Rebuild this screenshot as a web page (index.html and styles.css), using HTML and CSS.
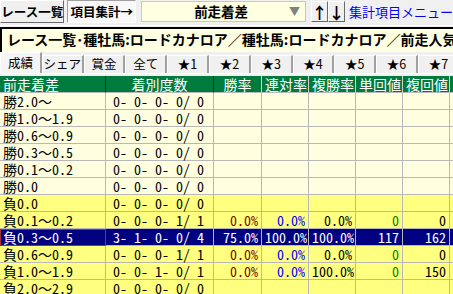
FILE: index.html
```html
<!DOCTYPE html>
<html lang="ja">
<head>
<meta charset="UTF-8">
<title>前走着差</title>
<link rel="stylesheet" href="styles.css">
</head>
<body>
<div class="toolbar">
    <div class="btn race">レース一覧</div>
    <div class="btn sum">項目集計→</div>
    <div class="combo">
        <span class="combo-text">前走着差</span>
        <span class="combo-arrow">▼</span>
    </div>
    <div class="updown">
        <div class="btn arrow">↑</div>
        <div class="btn arrow">↓</div>
    </div>
    <span class="menu">集計項目メニュー</span>
</div>

<div class="condition">レース一覧･種牡馬:ロードカナロア／種牡馬:ロードカナロア／前走人気</div>

<div class="tabs">
    <div class="tab active">成績</div>
    <div class="tab">シェア</div>
    <div class="tab">賞金</div>
    <div class="tab">全て</div>
    <div class="tab">★1</div>
    <div class="tab">★2</div>
    <div class="tab">★3</div>
    <div class="tab">★4</div>
    <div class="tab">★5</div>
    <div class="tab">★6</div>
    <div class="tab">★7</div>
</div>

<div class="grid">
    <div class="row head">
        <div class="cell fix left">前走着差</div>
        <div class="cell fix">着別度数</div>
        <div class="cell">勝率</div>
        <div class="cell">連対率</div>
        <div class="cell">複勝率</div>
        <div class="cell">単回値</div>
        <div class="cell">複回値</div>
        <div class="cell"></div>
    </div>
    <!-- win margin rows -->
    <div class="row">
        <div class="cell name">勝2.0～</div><div class="cell count">0- 0- 0- 0/ 0</div>
        <div class="cell"></div><div class="cell"></div><div class="cell"></div><div class="cell"></div><div class="cell"></div><div class="cell"></div>
    </div>
    <div class="row">
        <div class="cell name">勝1.0～1.9</div><div class="cell count">0- 0- 0- 0/ 0</div>
        <div class="cell"></div><div class="cell"></div><div class="cell"></div><div class="cell"></div><div class="cell"></div><div class="cell"></div>
    </div>
    <div class="row">
        <div class="cell name">勝0.6～0.9</div><div class="cell count">0- 0- 0- 0/ 0</div>
        <div class="cell"></div><div class="cell"></div><div class="cell"></div><div class="cell"></div><div class="cell"></div><div class="cell"></div>
    </div>
    <div class="row">
        <div class="cell name">勝0.3～0.5</div><div class="cell count">0- 0- 0- 0/ 0</div>
        <div class="cell"></div><div class="cell"></div><div class="cell"></div><div class="cell"></div><div class="cell"></div><div class="cell"></div>
    </div>
    <div class="row">
        <div class="cell name">勝0.1～0.2</div><div class="cell count">0- 0- 0- 0/ 0</div>
        <div class="cell"></div><div class="cell"></div><div class="cell"></div><div class="cell"></div><div class="cell"></div><div class="cell"></div>
    </div>
    <div class="row">
        <div class="cell name">勝0.0</div><div class="cell count">0- 0- 0- 0/ 0</div>
        <div class="cell"></div><div class="cell"></div><div class="cell"></div><div class="cell"></div><div class="cell"></div><div class="cell"></div>
    </div>
    <!-- lose margin rows -->
    <div class="row lose">
        <div class="cell name">負0.0</div><div class="cell count">0- 0- 0- 0/ 0</div>
        <div class="cell"></div><div class="cell"></div><div class="cell"></div><div class="cell"></div><div class="cell"></div><div class="cell"></div>
    </div>
    <div class="row lose">
        <div class="cell name">負0.1～0.2</div><div class="cell count">0- 0- 0- 1/ 1</div>
        <div class="cell num win">0.0%</div><div class="cell num ren">0.0%</div><div class="cell num">0.0%</div><div class="cell num tan">0</div><div class="cell num">0</div><div class="cell"></div>
    </div>
    <div class="row selected">
        <div class="cell name">負0.3～0.5</div><div class="cell count">3- 1- 0- 0/ 4</div>
        <div class="cell num">75.0%</div><div class="cell num">100.0%</div><div class="cell num">100.0%</div><div class="cell num">117</div><div class="cell num">162</div><div class="cell"></div>
    </div>
    <div class="row lose">
        <div class="cell name">負0.6～0.9</div><div class="cell count">0- 0- 0- 1/ 1</div>
        <div class="cell num win">0.0%</div><div class="cell num ren">0.0%</div><div class="cell num">0.0%</div><div class="cell num tan">0</div><div class="cell num">0</div><div class="cell"></div>
    </div>
    <div class="row lose">
        <div class="cell name">負1.0～1.9</div><div class="cell count">0- 0- 1- 0/ 1</div>
        <div class="cell num win">0.0%</div><div class="cell num ren">0.0%</div><div class="cell num">100.0%</div><div class="cell num tan">0</div><div class="cell num">150</div><div class="cell"></div>
    </div>
    <div class="row lose">
        <div class="cell name">負2.0～2.9</div><div class="cell count">0- 0- 0- 0/ 0</div>
        <div class="cell"></div><div class="cell"></div><div class="cell"></div><div class="cell"></div><div class="cell"></div><div class="cell"></div>
    </div>
</div>
</body>
</html>
```
FILE: styles.css
```css
body{
    margin: 0;
    width: 453px;
    height: 294px;
    overflow: hidden;
    background-color: #f0f0f0;
    font-family: "Noto Sans CJK JP", sans-serif;
}

/* top bar */
.toolbar{
    display: flex;
    height: 25px;
    border-bottom: 1px solid #ffffff;
    white-space: nowrap;
}
.btn{
    box-sizing: border-box;
    display: flex;
    align-items: center;
    justify-content: center;
    height: 23px;
    font-size: 12.5px;
    font-weight: bold;
    color: #000;
    background-color: #f0f0f0;
    border: 1px solid;
    border-color: #ffffff #696969 #696969 #ffffff;
}
.race{
    width: 73px;
}
.sum{
    width: 78px;
    margin-left: 3px;
    background-color: #f8f8f8;
    border-color: #a0a0a0 #ffffff #ffffff #a0a0a0;
}
.combo{
    box-sizing: border-box;
    display: flex;
    align-items: center;
    width: 187px;
    height: 21px;
    margin: 1px 0 0 5px;
    background-color: #ffffe1;
    border: 1px solid #c8c8c8;
}
.combo-text{
    flex: 1;
    text-align: center;
    font-size: 13.5px;
    font-weight: bold;
    line-height: 19px;
    padding-left: 12px;
}
.combo-arrow{
    width: 12px;
    margin-right: 5px;
    color: #808080;
    font-size: 11px;
    line-height: 19px;
    text-align: right;
}
.updown{
    display: flex;
    margin: 1px 0 0 5px;
}
.arrow{
    width: 17px;
    height: 21px;
    font-size: 16px;
}
.menu{
    margin: 3px 0 0 4px;
    font-size: 13px;
    color: #0000ff;
    line-height: 18px;
}

/* condition line */
.condition{
    box-sizing: border-box;
    height: 25px;
    margin-top: 1px;
    padding-left: 5px;
    background-color: #ffffe1;
    border-top: 2px solid #000;
    border-left: 2px solid #000;
    font-size: 14px;
    font-weight: bold;
    line-height: 21px;
    white-space: nowrap;
    overflow: hidden;
}

/* tabs */
.tabs{
    display: flex;
    align-items: flex-end;
    height: 21px;
    margin-bottom: 2px;
    border-bottom: 1px solid #ffffff;
    white-space: nowrap;
}
.tab{
    box-sizing: border-box;
    flex: 0 0 41.8px;
    height: 18px;
    font-size: 12.5px;
    line-height: 16px;
    text-align: center;
    background-color: #f0f0f0;
    border-top: 1px solid #ffffff;
    border-left: 1px solid #ffffff;
    border-right: 2px solid #a0a0a0;
}
.tab.active{
    height: 21px;
    line-height: 19px;
    background-color: #f4f4f4;
}

/* grid */
.row{
    display: grid;
    grid-template-columns: 106px 108px 48px 47px 47px 47px 47px 20px;
    background-color: #ffffe0;
}
.cell{
    box-sizing: border-box;
    height: 17px;
    padding: 0 3px;
    border-right: 1px solid #b8b8b8;
    border-bottom: 1px solid #b8b8b8;
    font-family: "Noto Sans Mono CJK JP", "Noto Sans CJK JP", monospace;
    font-size: 14px;
    line-height: 16px;
    white-space: pre;
}
.head{
    background-color: #007a3d;
}
.head .cell{
    color: #ffffff;
    text-align: center;
    border-right-color: #d0d0d0;
    border-bottom-color: #b8b8b8;
}
.head .fix{
    border-right-color: #202020;
}
.head .left{
    text-align: left;
}
.count{
    padding-left: 7px;
}
.num{
    text-align: right;
}
.win{
    color: #800000;
}
.ren{
    color: #0000ff;
}
.tan{
    color: #008000;
}
.lose{
    background-color: #ffff80;
}
.selected{
    background-color: #000080;
    color: #ffffff;
}
.selected .name{
    outline: 1px solid #a03030;
    outline-offset: -1px;
}
```
